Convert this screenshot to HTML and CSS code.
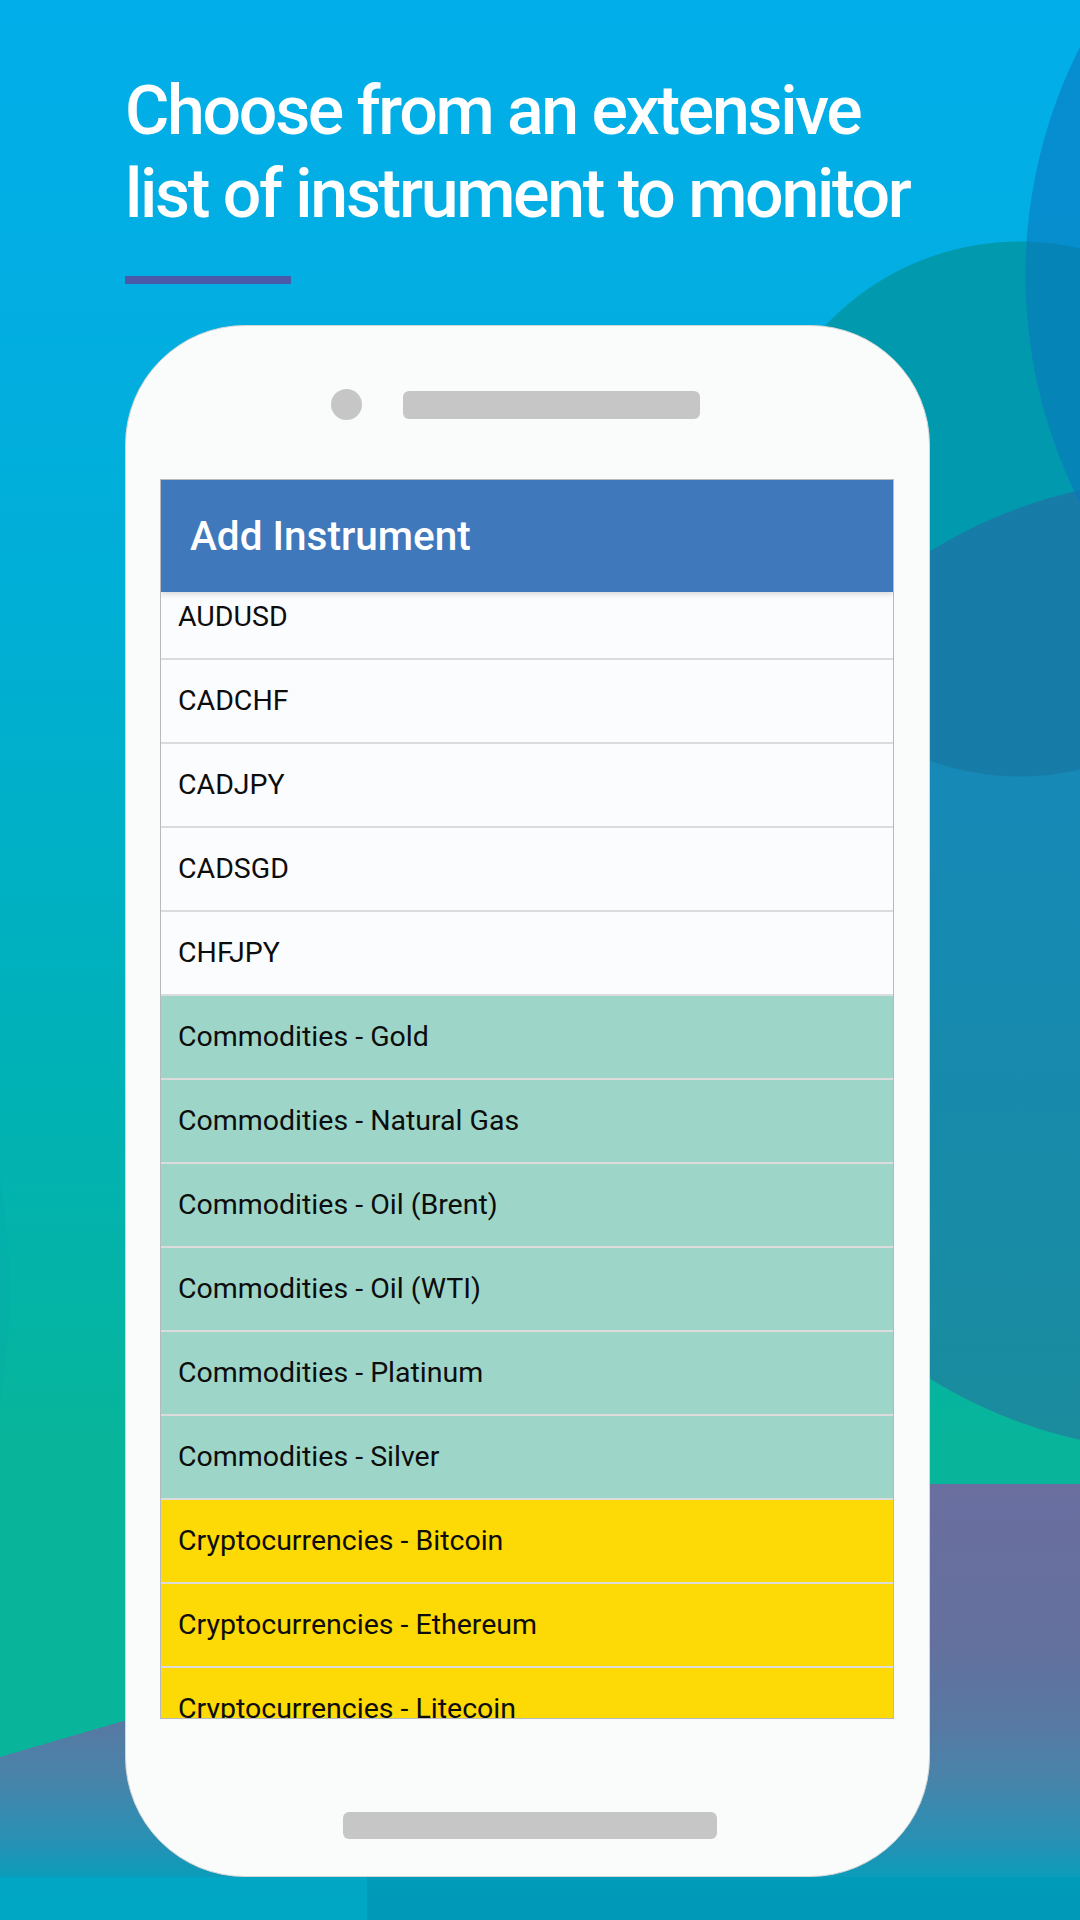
FILE: index.html
```html
<!DOCTYPE html>
<html>
<head>
<meta charset="utf-8">
<link rel="stylesheet" href="styles.css">
</head>
<body>

<div class="stage">

  <h1 class="headline">Choose from an extensive<br>list of instrument to monitor</h1>
  <div class="headline-rule"></div>

  <!-- Phone mockup -->
  <div class="phone">
    <div class="phone-top">
      <span class="camera"></span>
      <span class="speaker"></span>
    </div>

    <div class="screen">
      <div class="app-bar">Add Instrument</div>
      <div class="list-view">
        <ul class="instrument-list">
          <li>AUDUSD</li>
          <li>CADCHF</li>
          <li>CADJPY</li>
          <li>CADSGD</li>
          <li>CHFJPY</li>
          <li class="commodity">Commodities - Gold</li>
          <li class="commodity">Commodities - Natural Gas</li>
          <li class="commodity">Commodities - Oil (Brent)</li>
          <li class="commodity">Commodities - Oil (WTI)</li>
          <li class="commodity">Commodities - Platinum</li>
          <li class="commodity">Commodities - Silver</li>
          <li class="crypto">Cryptocurrencies - Bitcoin</li>
          <li class="crypto">Cryptocurrencies - Ethereum</li>
          <li class="crypto">Cryptocurrencies - Litecoin</li>
        </ul>
      </div>
    </div>

    <div class="phone-bottom">
      <span class="home-bar"></span>
    </div>
  </div>

</div>

</body>
</html>
```

FILE: styles.css
```css
html, body {
    margin: 0;
    padding: 0;
}

body {
    width: 1080px;
    height: 1920px;
    overflow: hidden;
    font-family: Roboto, "Liberation Sans", sans-serif;
}

/* Backdrop with the overlapping blobs */
.stage {
    width: 1080px;
    height: 1920px;
    box-sizing: border-box;
    padding: 70px 0 0 125px;
    background:
        /* strip under the phone */
        linear-gradient(#009bb9, #009ab8) 367px 1877px / 713px 43px no-repeat,
        linear-gradient(#00a6c3, #00a7c4) 0 1877px / 367px 43px no-repeat,
        /* green wedge cutting the purple band on a slant */
        linear-gradient(163.75deg, #08b59a 265.9px, transparent 265.9px) 0 1480px / 930px 280px no-repeat,
        /* purple band fading into teal */
        linear-gradient(transparent 44px, #6a6fa0 44px, #64709e 200px, #5878a2 280px, #4884aa 340px, #2890b4 400px, #0c9cba 437px, #00a2c0) 0 1440px / 100% 480px no-repeat,
        radial-gradient(circle at 1530px 275px, rgba(10, 115, 190, 0.55) 504px, transparent 505px),
        radial-gradient(circle at 1186px 965px, rgba(50, 90, 160, 0.45) 486px, transparent 487px),
        radial-gradient(circle at 1020px 509px, #0099ae 267px, transparent 268px),
        radial-gradient(circle at -690px 1290px, rgba(0, 120, 170, 0.06) 699px, transparent 700px),
        linear-gradient(#01aee9, #02aee2 300px, #00afd6 600px, #00b1bc 1000px, #04b4a6 1300px, #08b59a 1450px);
}

.headline {
    margin: 0;
    font-family: Roboto, "Liberation Sans", sans-serif;
    font-weight: 500;
    font-size: 68px;
    line-height: 83px;
    letter-spacing: -2.3px;
    color: #fff;
}

.headline-rule {
    width: 166px;
    height: 8px;
    margin-top: 40px;
    background: #4b5aa8;
}

/* Phone body */
.phone {
    margin-top: 41px;
    width: 805px;
    height: 1552px;
    box-sizing: border-box;
    padding: 0 35px 0 34px;
    border: 1px solid #d3d6d6;
    border-radius: 120px;
    background: #fafcfc;
    display: flex;
    flex-direction: column;
}

.phone-top {
    height: 153px;
    flex: none;
    box-sizing: border-box;
    padding: 4px 24px 0 0;
    display: flex;
    align-items: center;
    justify-content: center;
    gap: 41px;
}

.camera {
    width: 31px;
    height: 31px;
    border-radius: 50%;
    background: #c6c6c6;
}

.speaker {
    width: 297px;
    height: 28px;
    border-radius: 6px;
    background: #c6c6c6;
}

/* Screen */
.screen {
    height: 1240px;
    flex: none;
    box-sizing: border-box;
    border: 1px solid #b7babd;
    background: #fbfcfe;
    display: flex;
    flex-direction: column;
    overflow: hidden;
}

.app-bar {
    position: relative;
    z-index: 1;
    flex: none;
    height: 112px;
    padding-left: 29px;
    background: #3f78bb;
    color: #fff;
    font-size: 40.5px;
    font-weight: 500;
    line-height: 112px;
    box-shadow: 0 2px 6px rgba(0, 0, 0, 0.16);
}

.list-view {
    flex: 1;
    overflow: hidden;
}

.instrument-list {
    list-style: none;
    margin: -16px 0 0 0;
    padding: 0;
}

.instrument-list li {
    height: 82px;
    padding-left: 17px;
    border-bottom: 2px solid #dcdcdc;
    font-size: 28.5px;
    line-height: 82px;
    color: #0d0d0d;
}

.instrument-list li.commodity {
    background: #9dd6c8;
}

.instrument-list li.crypto {
    background: #fdd905;
}

.phone-bottom {
    flex: 1;
    padding: 93px 0 0 6px;
    display: flex;
    justify-content: center;
    align-items: flex-start;
}

.home-bar {
    width: 374px;
    height: 27px;
    border-radius: 6px;
    background: #c6c6c6;
}
```
